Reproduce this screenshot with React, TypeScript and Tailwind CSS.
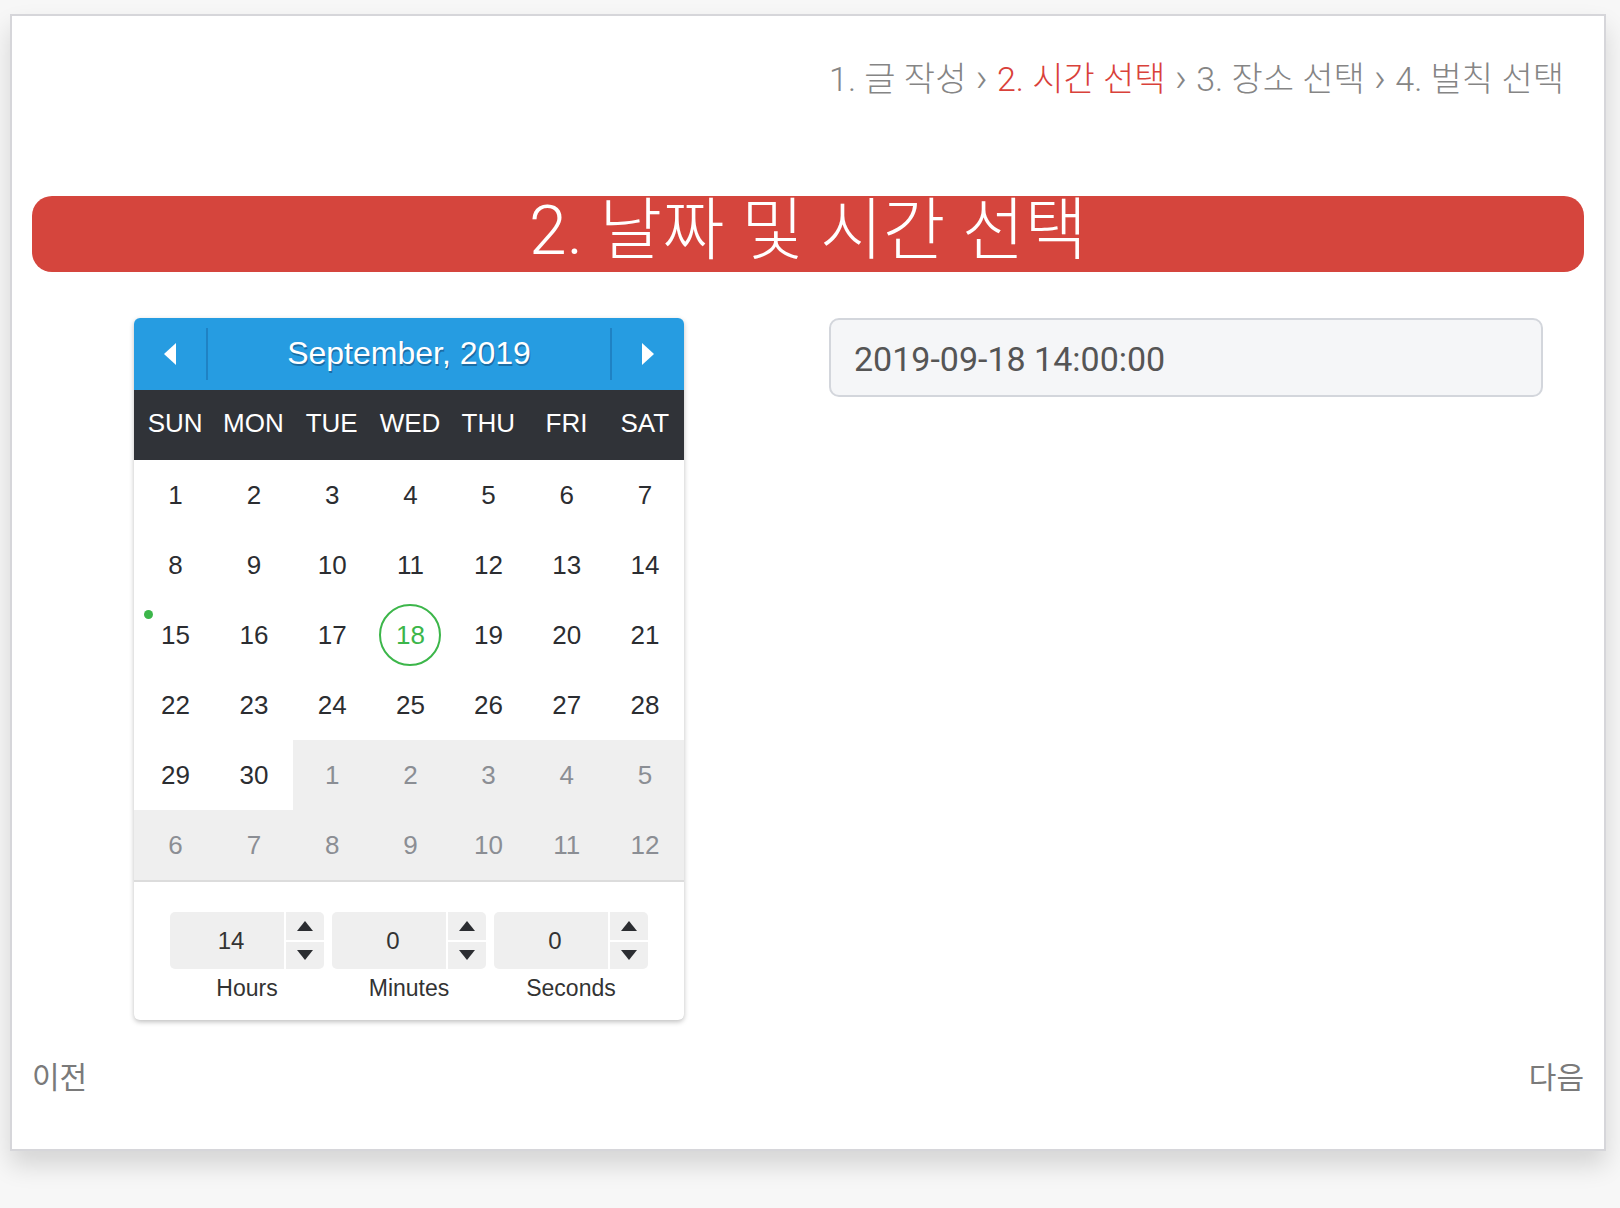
import React from "react";

const KR = "font-['Roboto','Noto_Sans_CJK_KR',sans-serif]";
const AR = "font-['Liberation_Sans',Arial,sans-serif]";

const weeks: { d: number; other: boolean }[][] = [
  [1, 2, 3, 4, 5, 6, 7].map((d) => ({ d, other: false })),
  [8, 9, 10, 11, 12, 13, 14].map((d) => ({ d, other: false })),
  [15, 16, 17, 18, 19, 20, 21].map((d) => ({ d, other: false })),
  [22, 23, 24, 25, 26, 27, 28].map((d) => ({ d, other: false })),
  [
    { d: 29, other: false },
    { d: 30, other: false },
    { d: 1, other: true },
    { d: 2, other: true },
    { d: 3, other: true },
    { d: 4, other: true },
    { d: 5, other: true },
  ],
  [6, 7, 8, 9, 10, 11, 12].map((d) => ({ d, other: true })),
];

function Spin({ value, label }: { value: string; label: string }) {
  return (
    <div className="flex w-[154px] flex-col items-center">
      <div className="flex h-[57px] w-full gap-[2px]">
        <div className="flex h-full flex-1 items-center justify-center rounded-l-[5px] bg-[#efefef] pl-[8px] text-[24px] text-[#333]">
          {value}
        </div>
        <div className="flex w-[38px] flex-col gap-[2px]">
          <div className="flex flex-1 items-center justify-center rounded-tr-[5px] bg-[#efefef]">
            <svg width="16" height="10" viewBox="0 0 16 10">
              <path d="M8 0 L16 10 L0 10 Z" fill="#2b2d31" />
            </svg>
          </div>
          <div className="flex flex-1 items-center justify-center rounded-br-[5px] bg-[#efefef]">
            <svg width="16" height="10" viewBox="0 0 16 10">
              <path d="M0 0 L16 0 L8 10 Z" fill="#2b2d31" />
            </svg>
          </div>
        </div>
      </div>
      <div className="mt-[6px] text-[23px] leading-[26px] text-[#333]">{label}</div>
    </div>
  );
}

function Calendar() {
  return (
    <div className={`${AR} w-[550px] overflow-hidden rounded-[6px] bg-white shadow-[0_2px_5px_rgba(0,0,0,0.25)]`}>
      <div className="flex h-[72px] items-center bg-[#269ce1]">
        <div className="flex h-full w-[72px] items-center justify-center">
          <svg width="12" height="22" viewBox="0 0 12 22">
            <path d="M12 0 L12 22 L0 11 Z" fill="#fff" />
          </svg>
        </div>
        <div className="h-[52px] w-[2px] bg-[#1f82c4]" />
        <div className="flex flex-1 items-center justify-center pb-[2px] text-[32px] text-white [text-shadow:1px_2px_0_#1b6ea6]">
          September, 2019
        </div>
        <div className="h-[52px] w-[2px] bg-[#1f82c4]" />
        <div className="flex h-full w-[72px] items-center justify-center">
          <svg width="12" height="22" viewBox="0 0 12 22">
            <path d="M0 0 L12 11 L0 22 Z" fill="#fff" />
          </svg>
        </div>
      </div>
      <div className="grid h-[70px] grid-cols-7 items-center bg-[#303338] pb-[4px] pl-[2px] text-[26px] text-white">
        {["SUN", "MON", "TUE", "WED", "THU", "FRI", "SAT"].map((w) => (
          <div key={w} className="text-center">
            {w}
          </div>
        ))}
      </div>
      <div className="grid grid-cols-[81px_repeat(6,1fr)] border-b-2 border-[#dcdcdc]">
        {weeks.flat().map((c, i) => {
          const selected = !c.other && c.d === 18;
          const today = !c.other && c.d === 15;
          return (
            <div
              key={i}
              className={`relative flex h-[70px] items-center justify-center text-[26px] ${
                c.other ? "bg-[#efefef] text-[#8b8e94]" : "bg-white text-[#2b2d31]"
              } ${i % 7 === 0 ? "pl-[2px]" : ""}`}
            >
              {today && <div className="absolute left-[10px] top-[10px] h-[9px] w-[9px] rounded-full bg-[#3cb64a]" />}
              {selected ? (
                <div className="flex h-[62px] w-[62px] items-center justify-center rounded-full border-2 border-[#3cb64a] text-[#3cb64a]">
                  {c.d}
                </div>
              ) : (
                <span>{c.d}</span>
              )}
            </div>
          );
        })}
      </div>
      <div className="flex justify-center gap-[8px] pb-[19px] pt-[30px]">
        <Spin value="14" label="Hours" />
        <Spin value="0" label="Minutes" />
        <Spin value="0" label="Seconds" />
      </div>
    </div>
  );
}

function Sep() {
  return <span className="mx-[1px] text-[40px] text-[#858585]">›</span>;
}

export default function App() {
  return (
    <div className="min-h-[1208px] bg-[#f7f7f7] pl-[10px] pt-[14px]">
      <div className="flex h-[1137px] w-[1596px] flex-col border-2 border-[#d6d6da] bg-white px-[20px] shadow-[0_14px_24px_rgba(0,0,0,0.14)]">
        <div className={`${KR} mt-[38px] h-[48px] whitespace-nowrap pr-[20px] text-right text-[34px] font-light leading-[48px] text-[#858585]`}>
          1. 글 작성 <Sep /> <span className="text-[#d9413a]">2. 시간 선택</span> <Sep /> 3. 장소 선택 <Sep /> 4. 벌칙 선택
        </div>
        <div className="mt-[94px] h-[76px] rounded-[20px] bg-[#d5453d]">
          <div className={`${KR} whitespace-nowrap text-center text-[68px] font-light leading-[70px] text-white`}>2. 날짜 및 시간 선택</div>
        </div>
        <div className="mt-[46px] flex items-start">
          <div className="ml-[102px]">
            <Calendar />
          </div>
          <div className="ml-[145px] flex h-[79px] w-[714px] items-center rounded-[10px] border-2 border-[#d3d6dc] bg-[#f5f6f8] pl-[23px] pt-[3px]">
            <span className="font-['Roboto',sans-serif] text-[34px] text-[#555]">2019-09-18 14:00:00</span>
          </div>
        </div>
        <div className={`${KR} mt-[36px] flex justify-between text-[30px] leading-[44px] text-[#7a7a7a]`}>
          <span>이전</span>
          <span>다음</span>
        </div>
      </div>
    </div>
  );
}
